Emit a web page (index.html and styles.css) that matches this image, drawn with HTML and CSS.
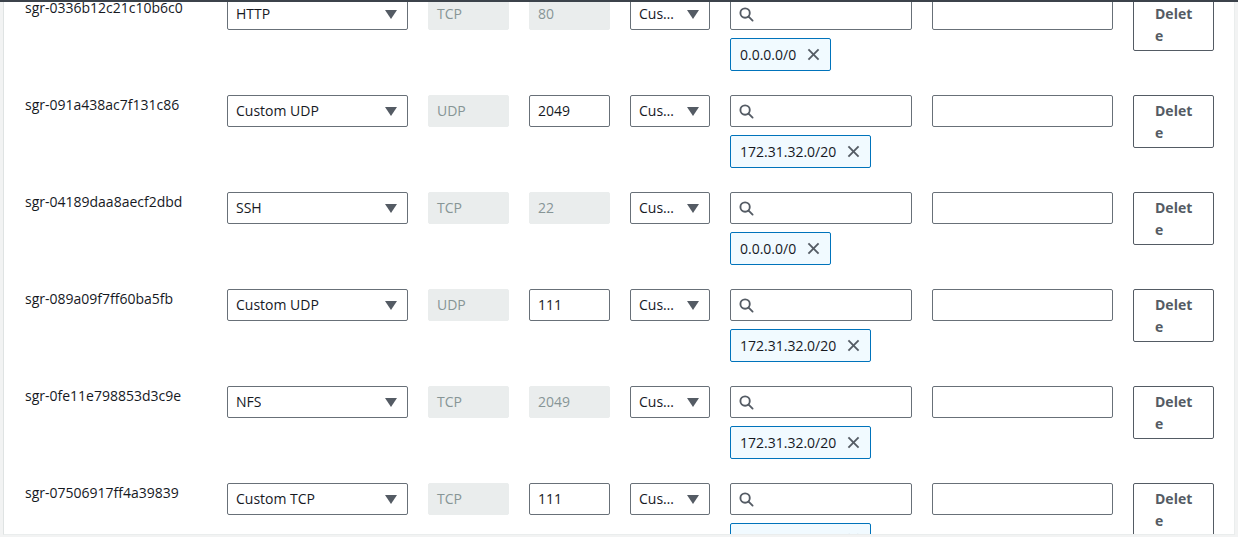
FILE: index.html
```html
<!DOCTYPE html>
<html lang="en">
<head>
<meta charset="utf-8">
<title>Inbound rules</title>
<link rel="stylesheet" href="styles.css">
</head>
<body>
<div class="topbar"></div>
<div class="panel">
  <div class="rows">

    <div class="rule">
      <div class="rule-id">sgr-0336b12c21c10b6c0</div>
      <div class="select"><span class="select-text">HTTP</span><span class="caret"></span></div>
      <div class="field disabled">TCP</div>
      <div class="field disabled">80</div>
      <div class="select select-narrow"><span class="select-text">Custom</span><span class="caret"></span></div>
      <div class="source">
        <div class="search"><svg class="search-icon" viewBox="0 0 16 16"><circle cx="6.5" cy="6.5" r="5" /><line x1="10.2" y1="10.2" x2="14.5" y2="14.5" /></svg></div>
        <div class="token"><span>0.0.0.0/0</span><svg class="dismiss" viewBox="0 0 14 14"><line x1="1.5" y1="1.5" x2="12.5" y2="12.5" /><line x1="12.5" y1="1.5" x2="1.5" y2="12.5" /></svg></div>
      </div>
      <div class="field"></div>
      <button class="delete">Delete</button>
    </div>

    <div class="rule">
      <div class="rule-id">sgr-091a438ac7f131c86</div>
      <div class="select"><span class="select-text">Custom UDP</span><span class="caret"></span></div>
      <div class="field disabled">UDP</div>
      <div class="field">2049</div>
      <div class="select select-narrow"><span class="select-text">Custom</span><span class="caret"></span></div>
      <div class="source">
        <div class="search"><svg class="search-icon" viewBox="0 0 16 16"><circle cx="6.5" cy="6.5" r="5" /><line x1="10.2" y1="10.2" x2="14.5" y2="14.5" /></svg></div>
        <div class="token"><span>172.31.32.0/20</span><svg class="dismiss" viewBox="0 0 14 14"><line x1="1.5" y1="1.5" x2="12.5" y2="12.5" /><line x1="12.5" y1="1.5" x2="1.5" y2="12.5" /></svg></div>
      </div>
      <div class="field"></div>
      <button class="delete">Delete</button>
    </div>

    <div class="rule">
      <div class="rule-id">sgr-04189daa8aecf2dbd</div>
      <div class="select"><span class="select-text">SSH</span><span class="caret"></span></div>
      <div class="field disabled">TCP</div>
      <div class="field disabled">22</div>
      <div class="select select-narrow"><span class="select-text">Custom</span><span class="caret"></span></div>
      <div class="source">
        <div class="search"><svg class="search-icon" viewBox="0 0 16 16"><circle cx="6.5" cy="6.5" r="5" /><line x1="10.2" y1="10.2" x2="14.5" y2="14.5" /></svg></div>
        <div class="token"><span>0.0.0.0/0</span><svg class="dismiss" viewBox="0 0 14 14"><line x1="1.5" y1="1.5" x2="12.5" y2="12.5" /><line x1="12.5" y1="1.5" x2="1.5" y2="12.5" /></svg></div>
      </div>
      <div class="field"></div>
      <button class="delete">Delete</button>
    </div>

    <div class="rule">
      <div class="rule-id">sgr-089a09f7ff60ba5fb</div>
      <div class="select"><span class="select-text">Custom UDP</span><span class="caret"></span></div>
      <div class="field disabled">UDP</div>
      <div class="field">111</div>
      <div class="select select-narrow"><span class="select-text">Custom</span><span class="caret"></span></div>
      <div class="source">
        <div class="search"><svg class="search-icon" viewBox="0 0 16 16"><circle cx="6.5" cy="6.5" r="5" /><line x1="10.2" y1="10.2" x2="14.5" y2="14.5" /></svg></div>
        <div class="token"><span>172.31.32.0/20</span><svg class="dismiss" viewBox="0 0 14 14"><line x1="1.5" y1="1.5" x2="12.5" y2="12.5" /><line x1="12.5" y1="1.5" x2="1.5" y2="12.5" /></svg></div>
      </div>
      <div class="field"></div>
      <button class="delete">Delete</button>
    </div>

    <div class="rule">
      <div class="rule-id">sgr-0fe11e798853d3c9e</div>
      <div class="select"><span class="select-text">NFS</span><span class="caret"></span></div>
      <div class="field disabled">TCP</div>
      <div class="field disabled">2049</div>
      <div class="select select-narrow"><span class="select-text">Custom</span><span class="caret"></span></div>
      <div class="source">
        <div class="search"><svg class="search-icon" viewBox="0 0 16 16"><circle cx="6.5" cy="6.5" r="5" /><line x1="10.2" y1="10.2" x2="14.5" y2="14.5" /></svg></div>
        <div class="token"><span>172.31.32.0/20</span><svg class="dismiss" viewBox="0 0 14 14"><line x1="1.5" y1="1.5" x2="12.5" y2="12.5" /><line x1="12.5" y1="1.5" x2="1.5" y2="12.5" /></svg></div>
      </div>
      <div class="field"></div>
      <button class="delete">Delete</button>
    </div>

    <div class="rule">
      <div class="rule-id">sgr-07506917ff4a39839</div>
      <div class="select"><span class="select-text">Custom TCP</span><span class="caret"></span></div>
      <div class="field disabled">TCP</div>
      <div class="field">111</div>
      <div class="select select-narrow"><span class="select-text">Custom</span><span class="caret"></span></div>
      <div class="source">
        <div class="search"><svg class="search-icon" viewBox="0 0 16 16"><circle cx="6.5" cy="6.5" r="5" /><line x1="10.2" y1="10.2" x2="14.5" y2="14.5" /></svg></div>
        <div class="token"><span>172.31.32.0/20</span><svg class="dismiss" viewBox="0 0 14 14"><line x1="1.5" y1="1.5" x2="12.5" y2="12.5" /><line x1="12.5" y1="1.5" x2="1.5" y2="12.5" /></svg></div>
      </div>
      <div class="field"></div>
      <button class="delete">Delete</button>
    </div>

  </div>
</div>
</body>
</html>
```

FILE: styles.css
```css
html, body {
  margin: 0;
  padding: 0;
  height: 100%;
  overflow: hidden;
}

body {
  background: #f2f3f3;
  font-family: "Open Sans", "Noto Sans", sans-serif;
  font-size: 14px;
  line-height: 20px;
  color: #16191f;
  position: relative;
}

.topbar {
  position: absolute;
  left: 0;
  right: 0;
  top: 0;
  height: 2px;
  background: #3c434b;
  z-index: 2;
}

.panel {
  margin: 0 3px 0 3px;
  height: 535px;
  box-sizing: border-box;
  background: #ffffff;
  border-left: 1px solid #dfe3e3;
  border-right: 1px solid #eaeded;
  border-bottom: 1px solid #eaeded;
  padding-left: 21px;
  overflow: hidden;
}

.rows {
  margin-top: -2px;
  display: flex;
  flex-direction: column;
  gap: 24px;
}

.rule {
  display: grid;
  grid-template-columns: 182px 181px 81px 81px 80px 182px 181px 81px;
  column-gap: 20px;
  align-items: start;
}

.rule-id {
  color: #16191f;
  white-space: nowrap;
}

.select,
.field,
.search {
  height: 32px;
  box-sizing: border-box;
  border: 1px solid #687078;
  border-radius: 2px;
  background: #fff;
  display: flex;
  align-items: center;
  padding: 0 8px;
}

.select {
  justify-content: space-between;
  padding-right: 10px;
  gap: 8px;
}

.select-narrow {
  gap: 11px;
}

.select-text {
  overflow: hidden;
  white-space: nowrap;
  text-overflow: ellipsis;
  min-width: 0;
}

.caret {
  flex: none;
  width: 0;
  height: 0;
  border-left: 6px solid transparent;
  border-right: 6px solid transparent;
  border-top: 9px solid #545b64;
}

.field.disabled {
  background: #eaeded;
  border-color: #eaeded;
  color: #879596;
}

.source {
  display: flex;
  flex-direction: column;
  align-items: flex-start;
  gap: 8px;
}

.search {
  width: 100%;
}

.search-icon {
  width: 15px;
  height: 15px;
  fill: none;
  stroke: #545b64;
  stroke-width: 2;
  stroke-linecap: round;
}

.token {
  height: 33px;
  box-sizing: border-box;
  display: inline-flex;
  align-items: center;
  gap: 11px;
  padding: 0 10px 0 9px;
  background: #f1faff;
  border: 1px solid #0073bb;
  border-radius: 2px;
}

.dismiss {
  width: 13px;
  height: 13px;
  stroke: #545b64;
  stroke-width: 2;
  stroke-linecap: butt;
}

.delete {
  height: 53px;
  box-sizing: border-box;
  border: 1px solid #545b64;
  border-radius: 2px;
  background: #fff;
  color: #545b64;
  font-family: inherit;
  font-size: 14px;
  font-weight: 700;
  line-height: 22px;
  padding: 4px 20px 3px 21px;
  text-align: left;
  word-break: break-all;
}
```
